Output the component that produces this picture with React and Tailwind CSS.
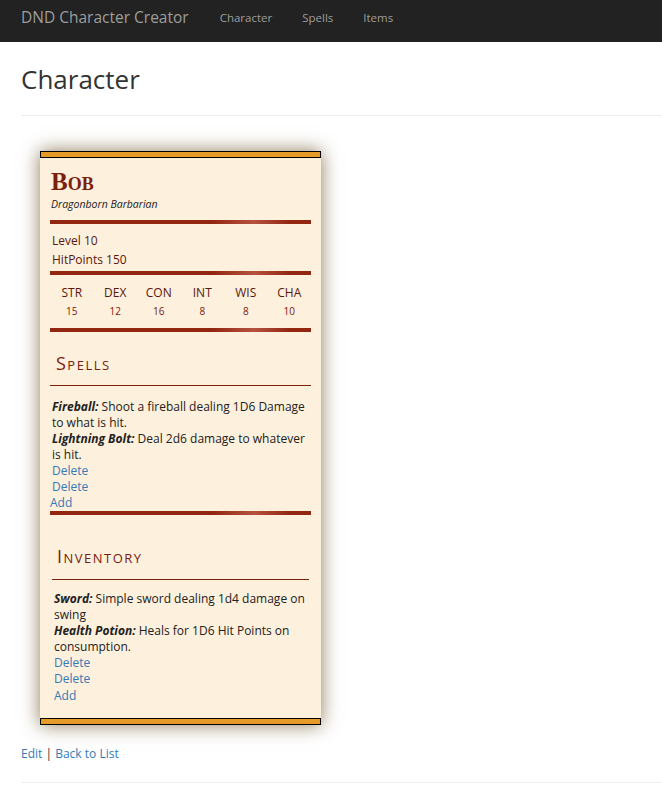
export default function App() {
  const stats = [
    ["STR", 15],
    ["DEX", 12],
    ["CON", 16],
    ["INT", 8],
    ["WIS", 8],
    ["CHA", 10],
  ];

  const Rule = () => (
    <div className="h-[4px] w-full bg-[linear-gradient(to_right,#922610_0%,#922610_62%,#b5523f_78%,#922610_92%)]" />
  );

  return (
    <div className="min-h-[795px] bg-white font-['Open_Sans',sans-serif] text-[#333]">
      {/* Navbar */}
      <nav className="flex h-[42px] items-center bg-[#222] pb-[7px] pl-[21px]">
        <span className="text-[15.5px] text-[#9d9d9d]">DND Character Creator</span>
        <div className="ml-[31px] flex gap-[30px] text-[11.5px] text-[#9d9d9d]">
          <a href="#">Character</a>
          <a href="#">Spells</a>
          <a href="#">Items</a>
        </div>
      </nav>

      <div className="pl-[21px]">
        <h2 className="pt-[19px] text-[26px] leading-[36px] text-[#333]">Character</h2>
        <hr className="mt-[18px] border-[#eee]" />

        {/* Stat block */}
        <div className="ml-[19px] mt-[35px] w-[281px] shadow-[0_0_18px_#8d7b5a]">
          <div className="h-[7px] border border-black bg-[#e69a28]" />
          <div className="bg-[#fdf0dc] px-[10px] pb-[14px] pt-[9px]">
            <h1 className="pl-[1px] font-['Liberation_Serif',serif] text-[25px] font-bold leading-[30px] text-[#7a200d] [font-variant:small-caps]">
              Bob
            </h1>
            <p className="pl-[1px] text-[10.5px] italic leading-[14px] text-[#222]">Dragonborn Barbarian</p>
            <div className="mt-[9px]">
              <Rule />
            </div>
            <div className="px-[2px] pb-[2px] pt-[7px] text-[12px] leading-[19px] text-[#58180d]">
              <p>Level 10</p>
              <p>HitPoints 150</p>
            </div>
            <Rule />
            <div className="grid grid-cols-6 pb-[8px] pt-[9px] text-center text-[#58180d]">
              {stats.map(([k, v]) => (
                <div key={k} className="flex flex-col">
                  <span className="text-[12px] leading-[18px]">{k}</span>
                  <span className="text-[10px] leading-[18px] text-[#7a200d]">{v}</span>
                </div>
              ))}
            </div>
            <Rule />

            <h3 className="mt-[19px] pl-[6px] text-[18px] leading-[24px] tracking-[1.5px] text-[#7a200d] [font-variant:small-caps]">
              Spells
            </h3>
            <div className="mt-[10px] h-px bg-[#7a200d]" />
            <div className="px-[2px] pt-[13px] text-[12px] leading-[16px] text-[#222]">
              <p>
                <b className="italic">Fireball:</b> Shoot a fireball dealing 1D6 Damage to what is hit.
              </p>
              <p>
                <b className="italic">Lightning Bolt:</b> Deal 2d6 damage to whatever is hit.
              </p>
              <a href="#" className="block text-[#337ab7]">Delete</a>
              <a href="#" className="block text-[#337ab7]">Delete</a>
            </div>
            <a href="#" className="block text-[12px] leading-[16px] text-[#337ab7]">Add</a>
            <Rule />

            <div className="px-[2px]">
              <h3 className="mt-[29px] pl-[5px] text-[18px] leading-[24px] tracking-[1.5px] text-[#7a200d] [font-variant:small-caps]">
                Inventory
              </h3>
              <div className="mt-[11px] h-px bg-[#7a200d]" />
              <div className="px-[2px] pt-[11px] text-[12px] leading-[16px] text-[#222]">
                <p>
                  <b className="italic">Sword:</b> Simple sword dealing 1d4 damage on swing
                </p>
                <p>
                  <b className="italic">Health Potion:</b> Heals for 1D6 Hit Points on consumption.
                </p>
                <a href="#" className="block text-[#337ab7]">Delete</a>
                <a href="#" className="block text-[#337ab7]">Delete</a>
                <a href="#" className="block pt-[1px] text-[#337ab7]">Add</a>
              </div>
            </div>
          </div>
          <div className="h-[7px] border border-black bg-[#e69a28]" />
        </div>

        <p className="mt-[21px] text-[12px] leading-[16px] text-[#333]">
          <a href="#" className="text-[#337ab7]">Edit</a> |{" "}
          <a href="#" className="text-[#337ab7]">Back to List</a>
        </p>
        <hr className="mt-[20px] border-[#eee]" />
      </div>
    </div>
  );
}
